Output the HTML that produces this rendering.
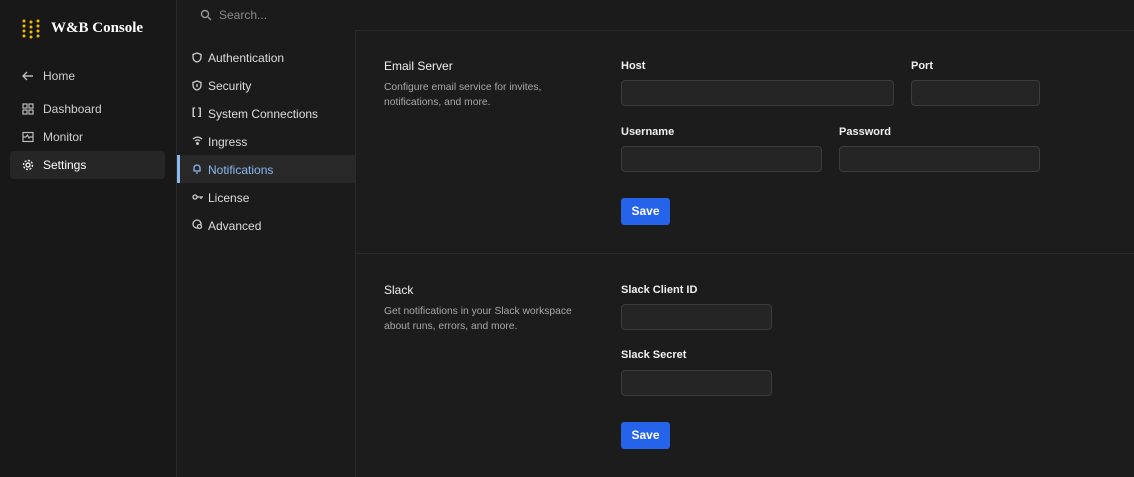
<!DOCTYPE html>
<html><head><style>
*{box-sizing:border-box;margin:0;padding:0}
body{width:1134px;height:477px;background:#1c1c1c;font-family:"Liberation Sans",sans-serif;color:#e8e8e8;position:relative;overflow:hidden}
.abs{position:absolute}
.side{left:0;top:0;width:177px;height:477px;background:#181818;border-right:1px solid #2a2a2a}
.mid{left:177px;top:30px;width:179px;height:447px;background:#1b1b1b;border-right:1px solid #2a2a2a}
.search{left:177px;top:0;width:957px;height:31px;border-bottom:1px solid #2a2a2a;background:#1b1b1b}
.t{font-size:12px;color:#cfcfcf;white-space:nowrap}
.nav{font-size:12px;color:#dedede;white-space:nowrap}
.lbl{font-size:11px;font-weight:bold;color:#f0f0f0}
.inp{background:#252525;border:1px solid #3c3c3c;border-radius:4px;height:26px}
.btn{background:#2563eb;color:#fff;font-size:12px;font-weight:bold;border-radius:3px;width:49px;height:27px;text-align:center;line-height:27px}
.h{font-size:12px;color:#f0f0f0}
.d{font-size:10.3px;color:#a8a8a8;line-height:15px}
svg{position:absolute}
</style></head><body>
<div class="abs side"></div>
<div class="abs search"></div>
<div class="abs mid"></div>
<svg style="left:21px;top:19px" width="20" height="20" viewBox="0 0 20 20" fill="#f5b800">
<circle cx="3" cy="2" r="1.5"/><circle cx="3" cy="7" r="1.5"/><circle cx="3" cy="12" r="1.5"/><circle cx="3" cy="17" r="1.5"/>
<circle cx="10" cy="3" r="1.5"/><circle cx="10" cy="8" r="1.5"/><circle cx="10" cy="13" r="1.5"/><circle cx="10" cy="18" r="1.5"/>
<circle cx="17" cy="2" r="1.5"/><circle cx="17" cy="7" r="1.5"/><circle cx="17" cy="12" r="1.5"/><circle cx="17" cy="17" r="1.5"/>
</svg>
<div class="abs" style="left:51px;top:20px;font-family:'Liberation Serif',serif;font-size:15px;font-weight:bold;color:#fff">W&amp;B Console</div>
<svg style="left:22px;top:70px" width="12" height="12" viewBox="0 0 12 12" stroke="#bbb" fill="none" stroke-width="1.4"><path d="M11 6H1M5 2L1 6l4 4"/></svg>
<div class="abs t" style="left:43px;top:69px">Home</div>
<svg style="left:22px;top:103px" width="12" height="12" viewBox="0 0 12 12" stroke="#bbb" fill="none" stroke-width="1.2"><rect x="1" y="1" width="4" height="4"/><rect x="7" y="1" width="4" height="4"/><rect x="1" y="7" width="4" height="4"/><rect x="7" y="7" width="4" height="4"/></svg>
<div class="abs t" style="left:43px;top:102px">Dashboard</div>
<svg style="left:22px;top:131px" width="12" height="12" viewBox="0 0 12 12" stroke="#bbb" fill="none" stroke-width="1.2"><rect x="1" y="1.5" width="10" height="9"/><path d="M1 6h3l1.5-2 1.5 3 1-1h3"/></svg>
<div class="abs t" style="left:43px;top:130px">Monitor</div>
<div class="abs" style="left:10px;top:151px;width:155px;height:28px;background:#262626;border-radius:4px"></div>
<svg style="left:22px;top:159px" width="12" height="12" viewBox="0 0 12 12" stroke="#eee" fill="none" stroke-width="1.4"><circle cx="6" cy="6" r="2"/><circle cx="6" cy="6" r="4.5" stroke-dasharray="2 1.5"/></svg>
<div class="abs t" style="left:43px;top:158px;color:#fff">Settings</div>
<svg style="left:200px;top:9px" width="12" height="12" viewBox="0 0 12 12" stroke="#999" fill="none" stroke-width="1.4"><circle cx="5" cy="5" r="3.5"/><path d="M8 8l3 3"/></svg>
<div class="abs" style="left:219px;top:8px;font-size:12px;color:#888">Search...</div>
<div class="abs" style="left:177px;top:155px;width:178px;height:28px;background:#282828"></div>
<div class="abs" style="left:177px;top:155px;width:3px;height:28px;background:#8ab8f0"></div>
<svg style="left:192px;top:52px" width="10" height="11" viewBox="0 0 10 11" stroke="#ccc" fill="none" stroke-width="1.3"><path d="M5 1L1 2.5V5c0 3 2 4.5 4 5 2-.5 4-2 4-5V2.5z"/></svg>
<div class="abs nav" style="left:208px;top:51px">Authentication</div>
<svg style="left:192px;top:80px" width="10" height="11" viewBox="0 0 10 11" stroke="#ccc" fill="none" stroke-width="1.3"><path d="M5 1L1 2.5V5c0 3 2 4.5 4 5 2-.5 4-2 4-5V2.5z"/><path d="M5 4v3"/></svg>
<div class="abs nav" style="left:208px;top:79px">Security</div>
<div class="abs nav" style="left:192px;top:107px;font-size:10px;font-weight:bold">[ ]</div>
<div class="abs nav" style="left:208px;top:107px">System Connections</div>
<svg style="left:192px;top:136px" width="11" height="9" viewBox="0 0 11 9" stroke="#ccc" fill="none" stroke-width="1.3"><path d="M1 3c3-2.5 6-2.5 9 0M3 5c2-1.5 3-1.5 5 0"/><circle cx="5.5" cy="7.5" r=".8" fill="#ccc"/></svg>
<div class="abs nav" style="left:208px;top:135px">Ingress</div>
<svg style="left:192px;top:163px" width="10" height="11" viewBox="0 0 10 11" stroke="#8ab8f0" fill="none" stroke-width="1.3"><path d="M2 8V5a3 3 0 016 0v3H1.5h7M4 10h2"/></svg>
<div class="abs nav" style="left:208px;top:163px;color:#8ab8f0">Notifications</div>
<svg style="left:192px;top:193px" width="12" height="8" viewBox="0 0 12 8" stroke="#ccc" fill="none" stroke-width="1.3"><circle cx="3" cy="4" r="2"/><path d="M5 4h6M9 4v2"/></svg>
<div class="abs nav" style="left:208px;top:191px">License</div>
<svg style="left:192px;top:219px" width="11" height="11" viewBox="0 0 11 11" stroke="#ccc" fill="none" stroke-width="1.3"><circle cx="5" cy="5" r="4"/><circle cx="7.5" cy="7.5" r="2" fill="#1b1b1b"/></svg>
<div class="abs nav" style="left:208px;top:219px">Advanced</div>
<div class="abs" style="left:356px;top:253px;width:778px;height:1px;background:#2a2a2a"></div>
<div class="abs h" style="left:384px;top:59px">Email Server</div>
<div class="abs d" style="left:384px;top:80px">Configure email service for invites,<br>notifications, and more.</div>
<div class="abs lbl" style="left:621px;top:60px">Host</div>
<div class="abs inp" style="left:621px;top:80px;width:273px"></div>
<div class="abs lbl" style="left:911px;top:60px">Port</div>
<div class="abs inp" style="left:911px;top:80px;width:129px"></div>
<div class="abs lbl" style="left:621px;top:126px">Username</div>
<div class="abs inp" style="left:621px;top:146px;width:201px"></div>
<div class="abs lbl" style="left:839px;top:126px">Password</div>
<div class="abs inp" style="left:839px;top:146px;width:201px"></div>
<div class="abs btn" style="left:621px;top:198px">Save</div>
<div class="abs h" style="left:384px;top:283px">Slack</div>
<div class="abs d" style="left:384px;top:304px">Get notifications in your Slack workspace<br>about runs, errors, and more.</div>
<div class="abs lbl" style="left:621px;top:284px">Slack Client ID</div>
<div class="abs inp" style="left:621px;top:304px;width:151px"></div>
<div class="abs lbl" style="left:621px;top:349px">Slack Secret</div>
<div class="abs inp" style="left:621px;top:370px;width:151px"></div>
<div class="abs btn" style="left:621px;top:422px">Save</div>
</body></html>
